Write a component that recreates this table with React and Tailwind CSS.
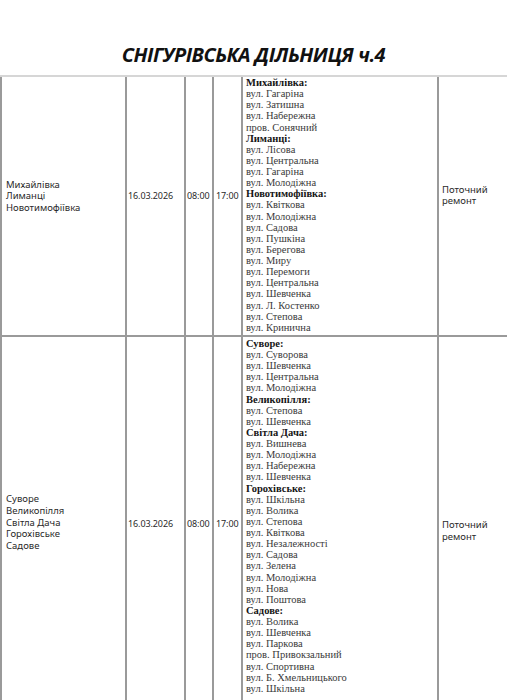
import React from "react";

const rows = [
  {
    places: ["Михайлівка", "Лиманці", "Новотимофіївка"],
    groups: [
      ["Михайлівка:", ["вул. Гагаріна", "вул. Затишна", "вул. Набережна", "пров. Сонячний"]],
      ["Лиманці:", ["вул. Лісова", "вул. Центральна", "вул. Гагаріна", "вул. Молодіжна"]],
      [
        "Новотимофіївка:",
        [
          "вул. Квіткова",
          "вул. Молодіжна",
          "вул. Садова",
          "вул. Пушкіна",
          "вул. Берегова",
          "вул. Миру",
          "вул. Перемоги",
          "вул. Центральна",
          "вул. Шевченка",
          "вул. Л. Костенко",
          "вул. Степова",
          "вул. Кринична",
        ],
      ],
    ],
    first: true,
  },
  {
    places: ["Суворе", "Великопілля", "Світла Дача", "Горохівське", "Садове"],
    groups: [
      ["Суворе:", ["вул. Суворова", "вул. Шевченка", "вул. Центральна", "вул. Молодіжна"]],
      ["Великопілля:", ["вул. Степова", "вул. Шевченка"]],
      ["Світла Дача:", ["вул. Вишнева", "вул. Молодіжна", "вул. Набережна", "вул. Шевченка"]],
      [
        "Горохівське:",
        [
          "вул. Шкільна",
          "вул. Волика",
          "вул. Степова",
          "вул. Квіткова",
          "вул. Незалежності",
          "вул. Садова",
          "вул. Зелена",
          "вул. Молодіжна",
          "вул. Нова",
          "вул. Поштова",
        ],
      ],
      [
        "Садове:",
        [
          "вул. Волика",
          "вул. Шевченка",
          "вул. Паркова",
          "пров. Привокзальний",
          "вул. Спортивна",
          "вул. Б. Хмельницького",
          "вул. Шкільна",
        ],
      ],
    ],
    first: false,
  },
];

function Row({ row }) {
  const f = row.first;
  return (
    <div className="flex border-b-2 border-[#9a9a9a]">
      <div
        className={`w-[125px] shrink-0 border-l-2 border-[#9a9a9a] flex flex-col justify-center pl-[4px] font-['Noto_Sans',sans-serif] text-[9.5px] leading-[11.6px] text-[#2a2a2a] ${f ? "pb-[20px]" : "pt-[6px]"}`}
      >
        {row.places.map((p) => (
          <div key={p}>{p}</div>
        ))}
      </div>
      <div
        className={`w-[59px] shrink-0 border-l-2 border-[#9a9a9a] flex items-center pl-[1px] font-['Noto_Sans',sans-serif] text-[9px] tracking-[-0.1px] text-[#2a2a2a] ${f ? "pb-[21px]" : "pt-[9px]"}`}
      >
        16.03.2026
      </div>
      <div
        className={`w-[28px] shrink-0 border-l-2 border-[#9a9a9a] flex items-center pl-[1px] font-['Noto_Sans',sans-serif] text-[9px] tracking-[-0.1px] text-[#2a2a2a] ${f ? "pb-[21px]" : "pt-[9px]"}`}
      >
        08:00
      </div>
      <div
        className={`w-[29px] shrink-0 border-l-2 border-[#9a9a9a] flex items-center pl-[2px] font-['Noto_Sans',sans-serif] text-[9px] tracking-[-0.1px] text-[#2a2a2a] ${f ? "pb-[21px]" : "pt-[9px]"}`}
      >
        17:00
      </div>
      <div
        className={`w-[196px] shrink-0 border-l-2 border-[#9a9a9a] pl-[3px] font-['Liberation_Serif',serif] text-[10.5px] leading-[11.13px] text-[#3a3a3a] ${f ? "pt-[0px] pb-[2px]" : "pt-[1px] pb-[8px]"}`}
      >
        {row.groups.map(([title, streets]) => (
          <div key={title}>
            <div className="font-bold text-[#151515]">{title}</div>
            {streets.map((s, i) => (
              <div key={i}>{s}</div>
            ))}
          </div>
        ))}
      </div>
      <div
        className={`w-[70px] shrink-0 border-l-2 border-[#9a9a9a] flex flex-col justify-center pl-[3px] font-['Noto_Sans',sans-serif] text-[9.5px] leading-[11.8px] text-[#2a2a2a] ${f ? "pb-[21px]" : "pt-[23px]"}`}
      >
        <div>Поточний</div>
        <div>ремонт</div>
      </div>
    </div>
  );
}

export default function App() {
  return (
    <div className="w-[507px] bg-white">
      <div className="pt-[43px] pb-[8px] text-center font-['Open_Sans',sans-serif] text-[20px] leading-[24px] font-bold italic text-[#111] tracking-[-0.5px]">
        СНІГУРІВСЬКА ДІЛЬНИЦЯ ч.4
      </div>
      <div className="border-t-2 border-[#d6d6d6]">
        {rows.map((r, i) => (
          <Row key={i} row={r} />
        ))}
      </div>
    </div>
  );
}
